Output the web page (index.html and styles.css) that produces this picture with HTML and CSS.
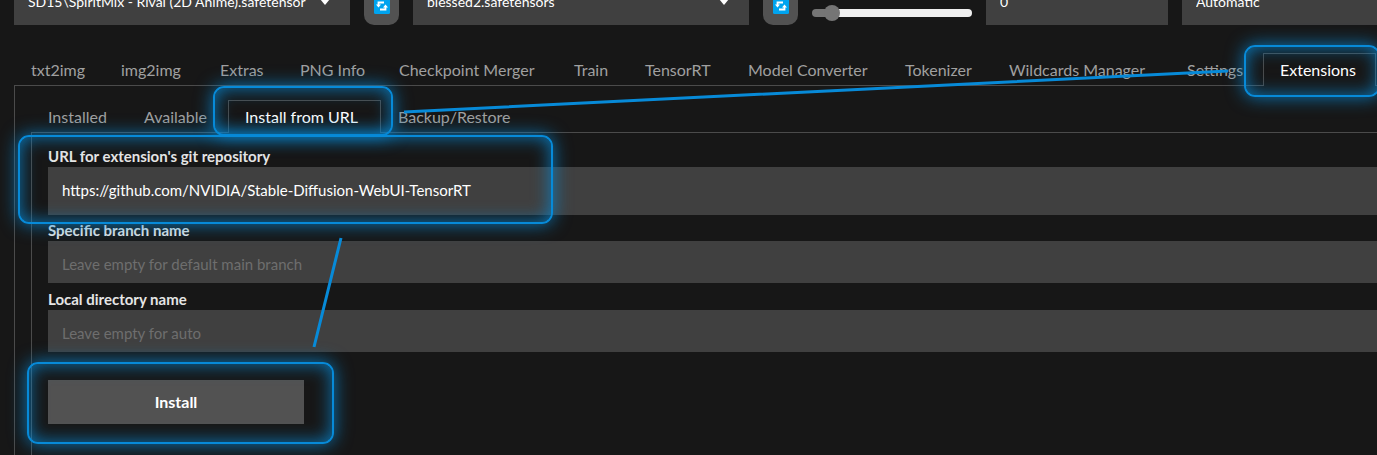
FILE: index.html
```html
<!DOCTYPE html>
<html lang="en">
<head>
<meta charset="utf-8">
<title>Extensions</title>
<link rel="stylesheet" href="styles.css">
</head>
<body>
<header class="toolbar">
  <div class="toolbar-row">
    <span class="picker"><select class="field" aria-label="Checkpoint"><option>SD15\SpiritMix - Rival (2D Anime).safetensor</option></select><svg class="caret" viewBox="0 0 10 6"><path d="M0 0h10L5 6z"/></svg></span>
    <button class="refresh" aria-label="Refresh checkpoints"><svg viewBox="0 0 16 16"><rect width="16" height="16" rx="1.5" fill="#00a4ef"/><path d="M4.500 7V4.500H10M11.500 9v2.500H6" fill="none" stroke="#fff" stroke-width="1.800"/><path d="M2 6.500h5L4.500 9.500zM9 9.500h5L11.500 6.500z" fill="#fff"/></svg></button>
    <span class="picker"><select class="field" aria-label="VAE"><option>blessed2.safetensors</option></select><svg class="caret" viewBox="0 0 10 6"><path d="M0 0h10L5 6z"/></svg></span>
    <button class="refresh" aria-label="Refresh VAE"><svg viewBox="0 0 16 16"><rect width="16" height="16" rx="1.5" fill="#00a4ef"/><path d="M4.500 7V4.500H10M11.500 9v2.500H6" fill="none" stroke="#fff" stroke-width="1.800"/><path d="M2 6.500h5L4.500 9.500zM9 9.500h5L11.500 6.500z" fill="#fff"/></svg></button>
    <input class="slider" type="range" min="0" max="100" value="8" aria-label="Clip skip">
    <input class="field number" type="text" value="0" aria-label="Value">
    <select class="field" aria-label="Mode"><option>Automatic</option></select>
  </div>
</header>
<main class="app">
  <nav class="tabs main-tabs">
    <button class="tab">txt2img</button>
    <button class="tab">img2img</button>
    <button class="tab">Extras</button>
    <button class="tab">PNG Info</button>
    <button class="tab">Checkpoint Merger</button>
    <button class="tab">Train</button>
    <button class="tab">TensorRT</button>
    <button class="tab">Model Converter</button>
    <button class="tab">Tokenizer</button>
    <button class="tab">Wildcards Manager</button>
    <button class="tab">Settings</button>
    <button class="tab active">Extensions</button>
    <span class="rest"></span>
  </nav>
  <section class="panel">
    <nav class="tabs sub-tabs">
      <button class="tab">Installed</button>
      <button class="tab">Available</button>
      <button class="tab active">Install from URL</button>
      <button class="tab">Backup/Restore</button>
    </nav>
    <form class="panel form">
      <label for="url">URL for extension's git repository</label>
      <textarea class="entry tall" id="url" spellcheck="false">https://github.com/NVIDIA/Stable-Diffusion-WebUI-TensorRT</textarea>
      <label for="branch">Specific branch name</label>
      <input class="entry" id="branch" type="text" placeholder="Leave empty for default main branch">
      <label for="dir">Local directory name</label>
      <input class="entry" id="dir" type="text" placeholder="Leave empty for auto">
      <button class="install" type="button">Install</button>
    </form>
  </section>
</main>
<div class="glow glow-extensions"></div>
<div class="glow glow-subtab"></div>
<div class="glow glow-url"></div>
<div class="glow glow-install"></div>
<svg class="lines" width="1377" height="455" viewBox="0 0 1377 455"><path d="M404 112L1228 71M341 238L314 347"/></svg>
</body>
</html>
```
FILE: styles.css
```css
* { box-sizing: border-box; }

body {
  margin: 0;
  position: relative;
  min-height: 100vh;
  overflow: hidden;
  background: #171717;
  color: #fff;
  font-family: Lato, sans-serif;
  font-size: 16px;
  display: flex;
  flex-direction: column;
}

button, input, select, textarea {
  font: inherit;
  color: inherit;
  border: 0;
  border-radius: 0;
  margin: 0;
}

/* The toolbar is scrolled partly out of view: its rows hang from the bottom edge. */
.toolbar {
  display: flex;
  align-items: flex-end;
  height: 25px;
  padding-left: 14px;
  overflow: hidden;
}

.toolbar-row {
  flex: 1;
  display: grid;
  grid-template-columns: 336px 35px 336px 35px 160px 182px 1fr;
  column-gap: 14px;
  align-items: end;
}

.picker { position: relative; display: block; height: 42px; }

.field {
  appearance: none;
  display: block;
  width: 100%;
  height: 42px;
  padding: 0 14px 6px;
  background: #404040;
  font-size: 14px;
}

.caret {
  position: absolute;
  right: 20px;
  bottom: 20px;
  width: 10px;
  height: 6px;
  fill: #fff;
}

.refresh {
  height: 42px;
  padding: 0 0 11px;
  border-radius: 10px;
  background: #525252;
  display: flex;
  align-items: flex-end;
  justify-content: center;
}

.refresh svg { width: 16px; height: 16px; }

.slider {
  appearance: none;
  width: 100%;
  height: 8px;
  margin-bottom: 8px;
  border-radius: 4px;
  background: linear-gradient(to right, #757575 20px, #efefef 20px);
}

.slider::-webkit-slider-thumb {
  appearance: none;
  width: 16px;
  height: 16px;
  border-radius: 50%;
  background: #757575;
}

.app {
  flex: 1;
  display: flex;
  flex-direction: column;
  padding: 28px 0 0 14px;
}

.tabs { display: grid; }

.main-tabs { grid-template-columns: 90px 99px 80px 99px 175px 71px 103px 157px 104px 178px 93px 113px 1fr; }

.sub-tabs { grid-template-columns: 96px 101px 153px 1fr; }

.tab {
  height: 33px;
  padding: 1px 17px 0;
  border-bottom: 1px solid #4b4b4b;
  background: none;
  color: #a0a0a0;
  text-align: left;
  white-space: nowrap;
}

.tab.active {
  padding: 0 16px 1px;
  border: 1px solid #4b4b4b;
  border-bottom: 0;
  color: #fff;
}

.rest { border-bottom: 1px solid #4b4b4b; }

.panel {
  flex: 1;
  display: flex;
  flex-direction: column;
  border-left: 1px solid #4b4b4b;
  padding: 14px 0 0 16px;
}

.form { padding: 12px 0 0 16px; }

.form label {
  height: 22px;
  line-height: 22px;
  font-size: 15px;
  font-weight: 700;
  color: #e5e5e5;
}

.entry {
  width: 100%;
  height: 42px;
  margin-bottom: 5px;
  padding: 4px 14px 0;
  background: #404040;
  font-size: 15px;
}

.entry::placeholder { color: #6e6e6e; opacity: 1; }

.tall {
  display: block;
  height: 48px;
  margin-bottom: 4px;
  padding: 13px 14px;
  line-height: 20px;
  resize: none;
  overflow: hidden;
}

.install {
  width: 256px;
  height: 44px;
  margin-top: 23px;
  padding: 0 0 2px;
  background: #525252;
  font-weight: 700;
}

.glow {
  position: absolute;
  border: 2px solid #078ad8;
  border-radius: 11px;
  box-shadow: 0 0 18px #0788d4d9, inset 0 0 18px #0788d4d9;
  pointer-events: none;
}

.glow-extensions { left: 1244px; top: 45px; width: 136px; height: 52px; }
.glow-subtab { left: 213px; top: 86px; width: 180px; height: 50px; }
.glow-url { left: 18px; top: 135px; width: 535px; height: 89px; }
.glow-install { left: 27px; top: 362px; width: 307px; height: 82px; }

.lines {
  position: absolute;
  left: 0;
  top: 0;
  fill: none;
  stroke: #078ad8;
  stroke-width: 3;
  pointer-events: none;
}
```
